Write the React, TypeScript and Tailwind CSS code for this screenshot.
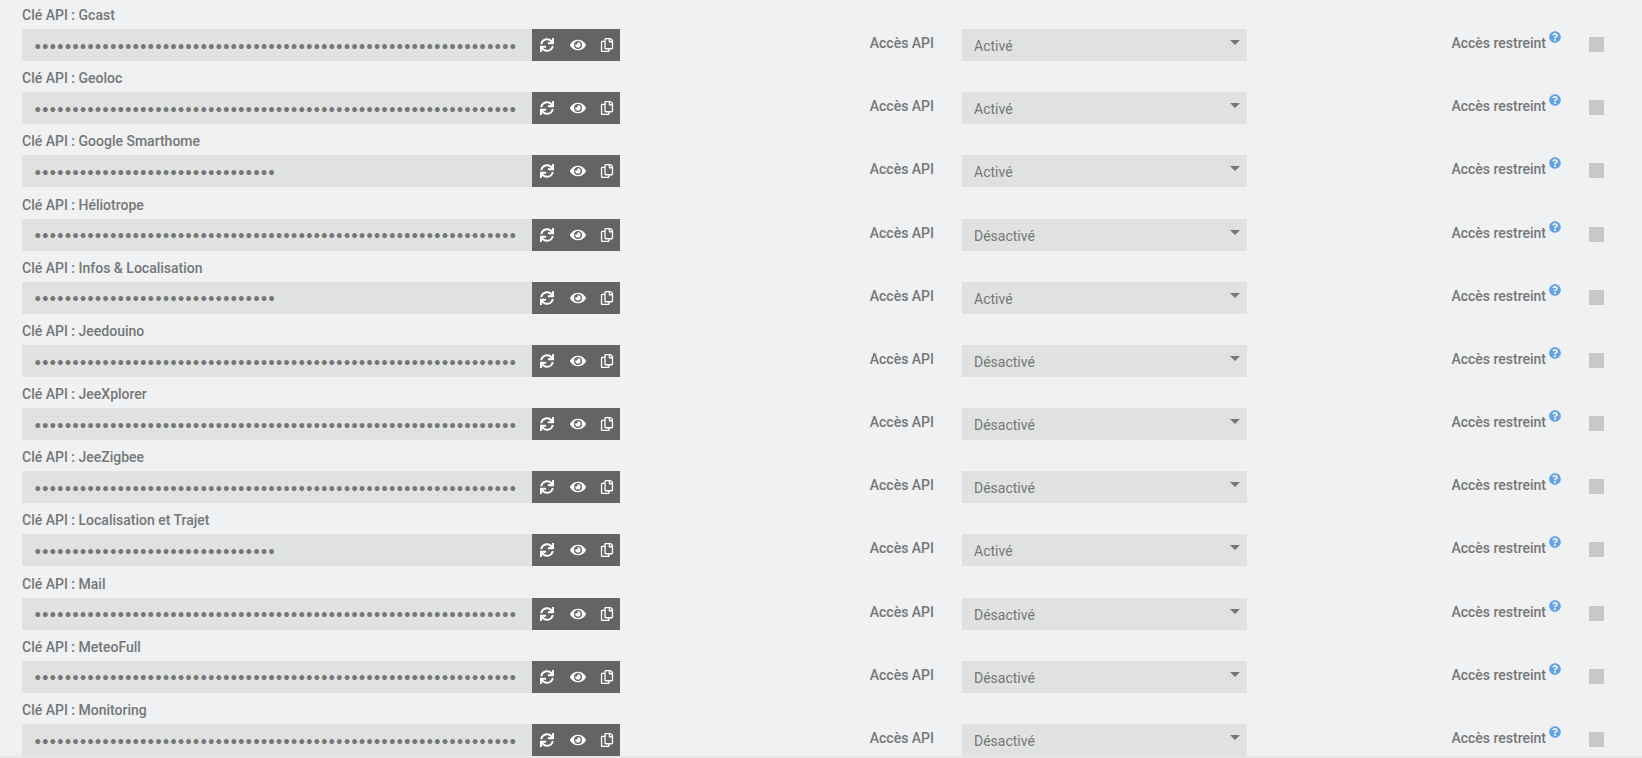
import { useState } from "react";
import { FaEye, FaQuestionCircle, FaRegCopy, FaSync } from "react-icons/fa";

type ApiKey = { name: string; length: number; access: string };

const apiKeys: ApiKey[] = [
  { name: "Gcast", length: 64, access: "Activé" },
  { name: "Geoloc", length: 64, access: "Activé" },
  { name: "Google Smarthome", length: 32, access: "Activé" },
  { name: "Héliotrope", length: 64, access: "Désactivé" },
  { name: "Infos & Localisation", length: 32, access: "Activé" },
  { name: "Jeedouino", length: 64, access: "Désactivé" },
  { name: "JeeXplorer", length: 64, access: "Désactivé" },
  { name: "JeeZigbee", length: 64, access: "Désactivé" },
  { name: "Localisation et Trajet", length: 32, access: "Activé" },
  { name: "Mail", length: 64, access: "Désactivé" },
  { name: "MeteoFull", length: 64, access: "Désactivé" },
  { name: "Monitoring", length: 64, access: "Désactivé" },
];

function ApiKeyRow({ item, id }: { item: ApiKey; id: string }) {
  const [visible, setVisible] = useState(false);

  return (
    <div>
      <label htmlFor={`${id}-key`} className="block h-[29px] w-fit font-medium leading-[30px]">
        Clé API : {item.name}
      </label>
      <div className="grid grid-cols-[598fr_286fr_285fr_286fr_31fr] gap-x-7 items-start">
        <div className="flex h-8 bg-[#e0e2e1]">
          <input
            id={`${id}-key`}
            type={visible ? "text" : "password"}
            readOnly
            defaultValue={"a".repeat(item.length)}
            className="min-w-0 flex-1 px-3 pt-0.5 font-[Lato,sans-serif] text-[13px] outline-none"
          />
          <div className="flex bg-[#646464] text-white">
            <button type="button" aria-label="Régénérer" className="flex w-[30px] items-center justify-center">
              <FaSync />
            </button>
            <button
              type="button"
              aria-label="Afficher"
              onClick={() => setVisible(!visible)}
              className="flex w-8 items-center justify-center"
            >
              <FaEye className="text-base" />
            </button>
            <button type="button" aria-label="Copier" className="flex w-[26px] items-center justify-center">
              <FaRegCopy />
            </button>
          </div>
        </div>

        <label htmlFor={`${id}-access`} className="text-right font-medium leading-7">
          Accès API
        </label>
        <div className="relative">
          <select
            id={`${id}-access`}
            defaultValue={item.access}
            className="block h-8 w-full appearance-none bg-[#e0e2e1] px-3 pt-0.5 outline-none"
          >
            <option>Activé</option>
            <option>Désactivé</option>
          </select>
          <svg
            viewBox="0 0 10 5"
            className="pointer-events-none absolute right-[7px] top-[11px] h-[5px] w-2.5"
            fill="currentColor"
          >
            <path d="M0 0H10L5 5Z" />
          </svg>
        </div>

        <label htmlFor={`${id}-restricted`} className="flex justify-end gap-[3px] font-medium leading-7">
          Accès restreint
          <FaQuestionCircle className="mt-0.5 size-3 text-[#62a2eb]" />
        </label>
        <input
          id={`${id}-restricted`}
          type="checkbox"
          className="mt-2 size-[15px] appearance-none bg-[#c8c8c8] checked:bg-[#62a2eb]"
        />
      </div>
    </div>
  );
}

export default function App() {
  return (
    <main className="bg-[#eff1f3] font-[Roboto,sans-serif] text-sm text-[#757776]">
      <div className="grid min-h-screen auto-rows-fr px-[22px]">
        {apiKeys.map((item, i) => (
          <ApiKeyRow key={item.name} item={item} id={`api-${i}`} />
        ))}
      </div>
      <div className="fixed inset-x-0 bottom-0 h-0.5 bg-[#e6e7e9]" />
    </main>
  );
}
